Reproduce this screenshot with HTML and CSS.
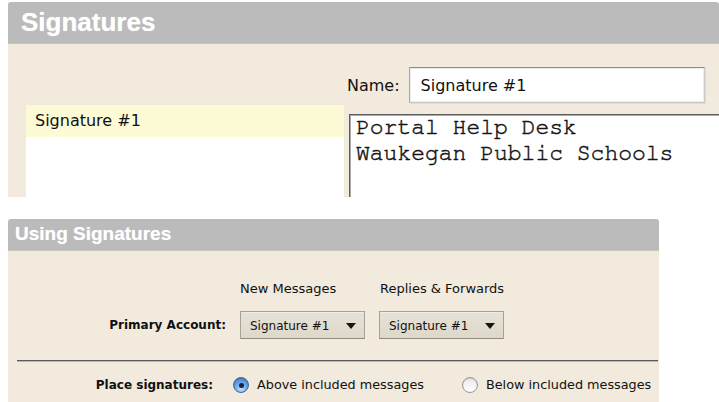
FILE: index.html
```html
<!DOCTYPE html>
<html lang="en">
<head>
<meta charset="utf-8">
<title>Signatures</title>
<link rel="stylesheet" href="styles.css">
</head>
<body>
  <section class="panel sig-panel">
    <h2 class="panel-title title-lg">Signatures</h2>
    <div class="sig-body">
      <div class="name-row">
        <label class="name-label" for="sig-name">Name:</label>
        <input class="name-input" id="sig-name" type="text" value="Signature #1">
      </div>
      <ul class="sig-list">
        <li class="sig-item is-selected">Signature #1</li>
      </ul>
      <textarea class="sig-text" spellcheck="false">Portal Help Desk
Waukegan Public Schools</textarea>
    </div>
  </section>

  <section class="panel use-panel">
    <h2 class="panel-title title-sm">Using Signatures</h2>
    <div class="use-body">
      <div class="assign-grid">
        <span></span>
        <span class="col-head">New Messages</span>
        <span class="col-head">Replies &amp; Forwards</span>
        <span class="row-label">Primary Account:</span>
        <div class="select"><span class="select-value">Signature #1</span><span class="select-arrow"></span></div>
        <div class="select"><span class="select-value">Signature #1</span><span class="select-arrow"></span></div>
      </div>
      <hr class="divider">
      <div class="place-row">
        <span class="row-label place-label">Place signatures:</span>
        <label class="radio-opt"><span class="radio is-checked"></span>Above included messages</label>
        <label class="radio-opt"><span class="radio"></span>Below included messages</label>
      </div>
    </div>
  </section>
</body>
</html>
```

FILE: styles.css
```css
html, body {
  margin: 0;
  height: 100%;
  overflow: hidden;
  background: #ffffff;
}

body {
  padding: 2px 0 0 8px;
  box-sizing: border-box;
  font-family: "DejaVu Sans", "Noto Sans", sans-serif;
  color: #111;
}

/* ---------- shared panel chrome ---------- */
.panel {
  background: #f2eadc;
  overflow: hidden;
  border-radius: 3px 3px 0 0;
}

.panel-title {
  margin: 0;
  background: #bbbbbb;
  color: #ffffff;
  font-family: "Liberation Sans", Arial, sans-serif;
  font-weight: bold;
  border-bottom: 1px solid #c9c4ba;
  text-shadow: 0 0 1px rgba(255, 255, 255, 0.6);
}

.title-lg {
  height: 41px;
  line-height: 41px;
  font-size: 26px;
  padding-left: 13px;
}

.title-sm {
  height: 31px;
  line-height: 30px;
  font-size: 19px;
  padding-left: 7px;
}

/* ---------- signature editor ---------- */
.sig-panel {
  height: 195px;
}

.sig-body {
  display: grid;
  grid-template-columns: 318px 1fr;
  grid-template-rows: 36px 1fr;
  column-gap: 3px;
  padding: 23px 0 0 18px;
}

.name-row {
  grid-column: 2;
  grid-row: 1;
  display: flex;
  align-items: center;
  gap: 9px;
  font-size: 16px;
}

.name-input {
  width: 296px;
  height: 36px;
  box-sizing: border-box;
  margin: 0;
  padding: 0 11px;
  font: 16px "DejaVu Sans", sans-serif;
  color: #111;
  background: #ffffff;
  border: 1px solid #c9c9c9;
  border-top-color: #8c8c8c;
  border-left-color: #a9a9a9;
  box-shadow: inset 0 0 0 1px #ececec, 1px 1px 0 #e4ddcf;
  outline: none;
}

.sig-list {
  grid-column: 1;
  grid-row: 2;
  list-style: none;
  margin: 2px 0 0;
  padding: 0;
  height: 120px;
  background: #ffffff;
}

.sig-item {
  height: 32px;
  line-height: 31px;
  padding-left: 9px;
  font-size: 16px;
}

.sig-item.is-selected {
  background: #fdfbd6;
}

.sig-text {
  grid-column: 2;
  grid-row: 2;
  margin: 11px 0 0 2px;
  width: 420px;
  height: 120px;
  box-sizing: border-box;
  padding: 0 6px;
  resize: none;
  overflow: hidden;
  font: 23px/26px "Nimbus Mono PS", "FreeMono", "Courier 10 Pitch", "Courier New", "Liberation Mono", monospace;
  -webkit-text-stroke: 0.5px #161616;
  color: #161616;
  background: #ffffff;
  border: 1px solid #b0b0b0;
  border-top-color: #5e5e5e;
  border-left-color: #5e5e5e;
  box-shadow: inset 1px 1px 0 #a8a8a8;
  outline: none;
}

/* ---------- usage settings ---------- */
.use-panel {
  width: 651px;
  margin-top: 22px;
  height: 200px;
}

.use-body {
  padding-top: 30px;
  font-size: 13px;
}

.assign-grid {
  display: grid;
  grid-template-columns: 218px 125px 125px;
  column-gap: 14px;
  row-gap: 15px;
  align-items: center;
}

.col-head {
  line-height: 15px;
  white-space: nowrap;
}

.col-head + .col-head {
  padding-left: 1px;
}

.row-label {
  font-weight: bold;
  font-size: 12px;
  text-align: right;
  white-space: nowrap;
}

.select {
  height: 28px;
  box-sizing: border-box;
  display: flex;
  align-items: center;
  justify-content: space-between;
  padding: 1px 8px 0 9px;
  font-size: 12px;
  background: linear-gradient(#e7e2d7, #ded8cb);
  border: 1px solid #a6a298;
  border-bottom-color: #8f8b82;
  box-shadow: inset 0 1px 0 #f1ede4;
}

.select-arrow {
  width: 0;
  height: 0;
  border-left: 5px solid transparent;
  border-right: 5px solid transparent;
  border-top: 6px solid #151515;
}

.divider {
  margin: 21px 1px 0 9px;
  height: 0;
  border: 0;
  border-top: 1px solid #5a5a5a;
  border-bottom: 1px solid #bdb7ab;
}

.place-row {
  display: flex;
  align-items: center;
  margin-top: 15px;
  line-height: 16px;
}

.place-label {
  width: 205px;
  box-sizing: border-box;
  margin-right: 20px;
}

.radio-opt {
  display: flex;
  align-items: center;
  gap: 8px;
  font-size: 12.8px;
  white-space: nowrap;
}

.radio-opt + .radio-opt {
  margin-left: 38px;
}

.radio {
  width: 16px;
  height: 16px;
  box-sizing: border-box;
  border-radius: 50%;
  border: 1px solid #9a9a9a;
  background: linear-gradient(#e9e9e9, #ffffff);
  box-shadow: inset 0 1px 1px rgba(0, 0, 0, 0.15);
  display: flex;
  align-items: center;
  justify-content: center;
}

.radio.is-checked {
  border-color: #46648f;
  background: radial-gradient(circle at 50% 80%, #bfe0ff 0%, #6aa6e8 45%, #3f7cc8 100%);
}

.radio.is-checked::after {
  content: "";
  width: 5px;
  height: 5px;
  border-radius: 50%;
  background: #16233a;
}
```
